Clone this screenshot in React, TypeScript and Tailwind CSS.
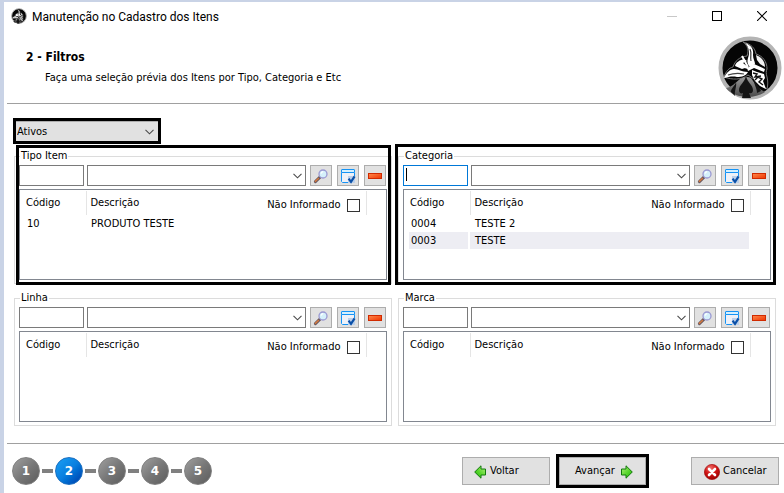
import React from "react";

const uiFont = "font-['DejaVu_Sans_Condensed','DejaVu_Sans',sans-serif]";

type Row = { code: string; description: string; selected?: boolean };

function VikingMark({ className }: { className: string }) {
  return (
    <svg viewBox="0 0 64 64" className={className} aria-hidden="true">
      <defs>
        <linearGradient id="cape" x1="0" y1="0" x2="0" y2="1">
          <stop offset="0" stopColor="#9a9a9a" />
          <stop offset="1" stopColor="#4a4a4a" />
        </linearGradient>
      </defs>
      <circle cx="32" cy="32" r="29.5" fill="#050505" stroke="#b4b4b4" strokeWidth="4" />
      <path d="M25 6c8 2 12 6 13 12 7 2 11 8 11 15-1 2-1 5 0 8 1 4 1 8 0 12l-6-3-7-7-6-4c-6 5-16 5-24 2 2-6 5-9 9-10 2-6 6-10 14-11 2-6 1-10-4-14z" fill="none" stroke="#777" strokeWidth="1" />
      <path d="M8 52c6-1 9-5 14-9 4-2 8-3 11-1 3 4 6 10 14 14-10 7-30 7-39-4z" fill="url(#cape)" />
      <path d="M28 40c-1 6-7 9-7 14 0 3 2 4 4 3l-1 5h9l-2-5c3 1 4-1 4-3 0-5-6-8-7-14zM18 46c-1 4-5 6-5 10l4 4c-1-5 2-9 1-14zM36 44c0 5 3 8 3 13l4-2c-1-4-5-7-7-11z" fill="#141414" />
      <path d="M27 7c6 2 9 6 8 12 0 4 2 6 2 9l-5 3c-3-3-3-6-2-9 2-5 1-11-3-15z" fill="#fff" />
      <path d="M32 13c2 4 0 7 1 12" fill="none" stroke="#333" strokeWidth="1.200" />
      <path d="M38 19c5 2 9 6 9 12l-5-3-3-4z" fill="#f2f2f2" />
      <path d="M17 30c1-4 5-6 9-7l3 2-4 2 5 4-6 2z" fill="#fff" />
      <path d="M24 20l6 11M20 29l10 3" stroke="#fff" strokeWidth="2" />
      <path d="M29 32l7-4 11 5-1 3-10-4-6 3z" fill="#fff" />
      <path d="M6 42c2-5 6-9 10-9 5 0 7 3 14 3-2 4-6 5-11 5-5-1-8 0-13 1z" fill="#fff" />
      <path d="M10 39c6-2 10-2 16-1" fill="none" stroke="#444" strokeWidth="1.200" />
      <path d="M34 34l5 2 7 2 1 4-2 3 3 8-6-3-5-5-3-6z" fill="#fff" />
      <path d="M35 37l4 1-2 3 6-1M37 44l3-3 4 2-3 3 4 3" fill="none" stroke="#111" strokeWidth="1.400" />
    </svg>
  );
}

function Chevron({ className }: { className: string }) {
  return (
    <svg viewBox="0 0 9 6" width="9" height="6" className={className} aria-hidden="true">
      <path d="M.5 .8l4 4 4-4" fill="none" stroke="#4a4a4a" strokeWidth="1.1" />
    </svg>
  );
}

function SearchIcon() {
  return (
    <svg viewBox="0 0 16 16" width="16" height="16" aria-hidden="true">
      <path d="M2.400 13.600L7 9.200" stroke="#6b5a60" strokeWidth="3" strokeLinecap="round" />
      <path d="M2.400 13.200L5.400 10.400" stroke="#d9793c" strokeWidth="1.4" strokeLinecap="round" />
      <circle cx="10" cy="6" r="4" fill="#d5f0fb" stroke="#9a98d2" strokeWidth="1.3" />
      <path d="M8 5.600c.3-1.200 1-1.800 2.200-1.900" stroke="#fff" strokeWidth="1.2" fill="none" />
    </svg>
  );
}

function SelectAllIcon() {
  return (
    <svg viewBox="0 0 16 16" width="16" height="16" aria-hidden="true">
      <path d="M1.500 4.500h13v10h-12l-1-1z" fill="#eef1f8" stroke="#1593f5" />
      <rect x="1.500" y="1.500" width="13" height="3" rx=".5" fill="#d4f0ff" stroke="#1593f5" />
      <rect x="8" y="8" width="7" height="7" fill="#bcd0ea" />
      <path d="M8.600 10.600l2.400 3.200 3.600-5.400" fill="none" stroke="#0b50a8" strokeWidth="2.200" />
    </svg>
  );
}

function RemoveIcon() {
  return (
    <svg viewBox="0 0 14 6" width="14" height="6" aria-hidden="true">
      <defs>
        <linearGradient id="bar" x1="0" x2="1" y1="0" y2="1">
          <stop offset="0" stopColor="#ff8a4c" />
          <stop offset="1" stopColor="#f03400" />
        </linearGradient>
      </defs>
      <rect x=".5" y=".5" width="13" height="5" fill="url(#bar)" stroke="#d02a00" />
    </svg>
  );
}

function ArrowIcon({ flip }: { flip?: boolean }) {
  return (
    <svg viewBox="0 0 12 14" width="12" height="14" className={flip ? "-scale-x-100" : ""} aria-hidden="true">
      <defs>
        <linearGradient id="leaf" x1="0" x2="1" y1="0" y2="1">
          <stop offset="0" stopColor="#b4f07a" />
          <stop offset=".6" stopColor="#4fd326" />
          <stop offset="1" stopColor="#2aa80e" />
        </linearGradient>
      </defs>
      <path d="M.5 4h4.500V.8L11.300 7 5 13.200V10H.5z" fill="url(#leaf)" stroke="#127a0c" />
    </svg>
  );
}

function CancelIcon() {
  return (
    <svg viewBox="0 0 16 16" width="16" height="16" aria-hidden="true">
      <defs>
        <radialGradient id="stop" cx=".4" cy=".25" r=".8">
          <stop offset="0" stopColor="#f0706c" />
          <stop offset=".5" stopColor="#cf1414" />
          <stop offset="1" stopColor="#980000" />
        </radialGradient>
      </defs>
      <circle cx="8" cy="8" r="7.600" fill="url(#stop)" stroke="#a30c0c" strokeWidth=".7" />
      <path d="M5 5l6 6M11 5l-6 6" stroke="#fff" strokeWidth="2.600" strokeLinecap="round" />
    </svg>
  );
}

function ToolButton({ label, children }: { label: string; children: React.ReactNode }) {
  return (
    <button type="button" aria-label={label} className="flex h-[21px] w-[22px] shrink-0 items-center justify-center border border-[#adadad] bg-[#e1e1e1]">
      {children}
    </button>
  );
}

const idleInput = "h-[21px] w-full border border-[#7a7a7a] px-1 outline-none";
const activeInput = "h-[21px] w-full border border-[#0078d7] px-1 outline-none";

type PanelProps = { id: string; title: string; rows?: Row[]; focused?: boolean; mark?: string };

function FilterPanel({ id, title, rows = [], focused, mark }: PanelProps) {
  return (
    <div className="relative">
      <fieldset className="h-full min-w-0 border border-[#dcdcdc] px-1 pb-[3px]">
        <legend className="ml-px px-px leading-3">{title}</legend>
        <div className="mt-[3px] flex">
          <div className="relative mr-[3px] flex w-[65px] shrink-0">
            <input aria-label={`Código ${title}`} className={focused ? activeInput : idleInput} />
            {focused && <span className="absolute top-[3px] left-[3px] h-[13px] w-px bg-black" />}
          </div>
          <div className="relative mr-1 flex min-w-0 flex-1">
            <select aria-label={title} className="h-[21px] w-full appearance-none border border-[#7a7a7a] bg-white px-1 outline-none">
              <option></option>
            </select>
            <Chevron className="pointer-events-none absolute top-2 right-1" />
          </div>
          <div className="flex gap-[5px] pr-px">
            <ToolButton label="Pesquisar"><SearchIcon /></ToolButton>
            <ToolButton label="Selecionar"><SelectAllIcon /></ToolButton>
            <ToolButton label="Remover"><RemoveIcon /></ToolButton>
          </div>
        </div>
        <div className="mt-[3px] h-[91px] border border-[#828790] pt-px">
          <table className="w-full table-fixed border-collapse text-left">
            <thead>
              <tr className="h-6">
                <th className="w-[66px] border-r border-[#e5e5e5] p-0 pt-px pl-[6px] font-normal">Código</th>
                <th className="border-r border-[#e5e5e5] p-0 pt-px pl-1 font-normal">
                  <div className="flex items-center justify-between pr-[6px]">
                    <span>Descrição</span>
                    <label htmlFor={`${id}-none`} className="flex items-center gap-[6px] pt-[3px]">
                      Não Informado
                      <input id={`${id}-none`} type="checkbox" className="size-[13px] appearance-none border border-[#333] bg-white" />
                    </label>
                  </div>
                </th>
                <th className="w-5 p-0" aria-label="Ações"></th>
              </tr>
            </thead>
            <tbody>
              {rows.map((row) => (
                <tr key={row.code} className="h-[17px]">
                  <td className="p-0 pr-[2px] pl-[5px]">
                    <div className={row.selected ? "bg-[#ededf3] pt-px pl-[2px] leading-4" : "pt-px pl-[2px] leading-4"}>{row.code}</div>
                  </td>
                  <td className="p-0 pr-px">
                    <div className={row.selected ? "bg-[#ededf3] pt-px pl-[5px] leading-4" : "pt-px pl-[5px] leading-4"}>{row.description}</div>
                  </td>
                  <td className="p-0"></td>
                </tr>
              ))}
            </tbody>
          </table>
        </div>
      </fieldset>
      {mark && <div className={`pointer-events-none absolute border-3 border-black ${mark}`} />}
    </div>
  );
}

const stepBase = "flex size-7 items-center justify-center rounded-full border font-['DejaVu_Sans',sans-serif]";

function Steps({ current }: { current: number }) {
  return (
    <ol className="flex items-center gap-[2px] text-xs font-bold text-white">
      {[1, 2, 3, 4, 5].map((n) => (
        <React.Fragment key={n}>
          {n > 1 && <li aria-hidden="true" className="h-1 w-[11px] bg-[#808080]" />}
          <li
            className={`${stepBase} ${
              n === current
                ? "border-[#1c6fc0] bg-linear-to-br from-[#1aa0f4] via-[#0a7fe0] to-[#0038a8]"
                : "border-[#808080] bg-linear-to-br from-[#a0a0a0] via-[#787878] to-[#5c5c5c]"
            }`}
          >
            {n}
          </li>
        </React.Fragment>
      ))}
    </ol>
  );
}

const actionButton = "flex h-7 items-center border border-[#adadad] bg-[#e1e1e1] pt-px";

export default function App() {
  return (
    <div className={`min-h-screen border-t-2 border-l-4 border-[#c9d3e6] bg-white text-[11px] text-black ${uiFont}`}>
      <header className="flex h-7 items-center pl-[7px] font-[Roboto,sans-serif] text-xs">
        <VikingMark className="mr-[5px] size-4" />
        <h1 className="flex-1 pt-px">Manutenção no Cadastro dos Itens</h1>
        <button type="button" aria-label="Minimizar" className="flex w-[45px] justify-center">
          <span className="h-px w-[10px] bg-[#c8c8c8]" />
        </button>
        <button type="button" aria-label="Maximizar" className="flex w-[45px] justify-center">
          <span className="size-[10px] border border-black" />
        </button>
        <button type="button" aria-label="Fechar" className="flex w-[45px] justify-center">
          <svg viewBox="0 0 10 10" width="10" height="10" aria-hidden="true">
            <path d="M0 0l10 10M10 0L0 10" stroke="#000" strokeWidth="1.100" />
          </svg>
        </button>
      </header>

      <section className="ml-[3px] flex h-[74px] justify-between border-b border-[#a0a0a0] pr-[2px]">
        <div className="pt-[19px] pl-[19px]">
          <h2 className="text-xs leading-4 font-bold">2 - Filtros</h2>
          <p className="mt-[5px] pl-[19px] leading-4">Faça uma seleção prévia dos Itens por Tipo, Categoria e Etc</p>
        </div>
        <VikingMark className="mt-[6px] size-16 shrink-0" />
      </section>

      <main className="pt-[14px] pr-2 pl-[10px]">
        <div className="relative -ml-px flex h-[26px] w-[148px] border-3 border-black">
          <select aria-label="Situação" className="w-full appearance-none border-t border-[#adadad] bg-[#e1e1e1] px-px pt-[2px] outline-none">
            <option>Ativos</option>
          </select>
          <Chevron className="pointer-events-none absolute top-2 right-1" />
        </div>

        <div className="mt-[6px] grid grid-cols-2 gap-x-[6px] gap-y-2">
          <FilterPanel id="tipo" title="Tipo Item" rows={[{ code: "10", description: "PRODUTO TESTE" }]} mark="-top-[5px] -bottom-px right-px left-[2px]" />
          <FilterPanel
            id="categoria"
            title="Categoria"
            focused
            rows={[
              { code: "0004", description: "TESTE 2" },
              { code: "0003", description: "TESTE", selected: true },
            ]}
            mark="-top-[6px] -bottom-px right-0 -left-[3px]"
          />
          <FilterPanel id="linha" title="Linha" />
          <FilterPanel id="marca" title="Marca" />
        </div>
      </main>

      <footer className="mt-[17px] ml-[3px] flex items-center border-t border-[#a0a0a0] pt-[10px] pr-[5px] pl-[5px]">
        <Steps current={2} />
        <div className="ml-auto flex items-center">
          <button type="button" className={`${actionButton} w-[88px] gap-1 pl-[11px]`}>
            <ArrowIcon flip />
            Voltar
          </button>
          <div className="mr-[42px] ml-[6px] border-3 border-black">
            <button type="button" className={`${actionButton} w-[87px] gap-[6px] pl-[15px]`}>
              Avançar
              <ArrowIcon />
            </button>
          </div>
          <button type="button" className={`${actionButton} w-[88px] gap-[3px] pl-3`}>
            <CancelIcon />
            Cancelar
          </button>
        </div>
      </footer>
    </div>
  );
}
